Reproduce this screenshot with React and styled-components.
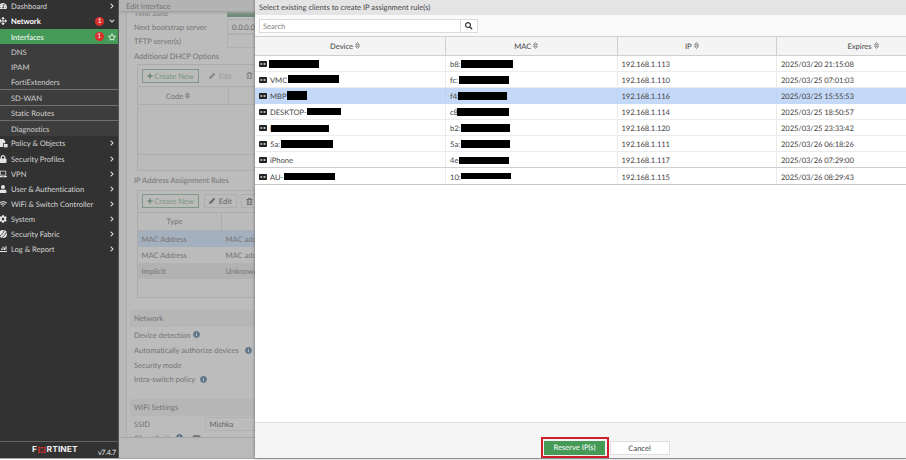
import styled, { createGlobalStyle, css } from 'styled-components';
import {
  FaTachometerAlt, FaArrowsAlt, FaLock, FaLaptop, FaUser, FaWifi, FaCog,
  FaChartBar, FaChevronRight, FaChevronDown, FaRegStar, FaSearch, FaPlus,
  FaPencilAlt, FaRegTrashAlt, FaInfoCircle,
} from 'react-icons/fa';

const GlobalStyle = createGlobalStyle`
  * {
    box-sizing: border-box;
  }
  body {
    margin: 0;
    overflow: hidden;
    font-family: Lato, 'Open Sans', sans-serif;
    font-size: 7.6px;
    letter-spacing: -0.02px;
    color: #444;
    background: #fff;
    text-rendering: geometricPrecision;
  }
  svg {
    display: block;
    flex: none;
  }
`;
const Screen = styled.div`
  width: 906px;
  height: 460px;
  display: flex;
  flex-direction: column;
  overflow: hidden;
`;
const Main = styled.div`
  height: 459px;
  display: flex;
  border-bottom: 1px solid #a6a6a6;
`;

/* sidebar */
const Sidebar = styled.nav`
  width: 119px;
  height: 458px;
  display: flex;
  flex: none;
  flex-direction: column;
  overflow: hidden;
  color: #d6d6d6;
  background-color: #323232;
  border-right: 1px solid #555;
`;
const Menu = styled.div`
  flex: 1;
  margin-top: -1.2px;
`;
const MenuRow = styled.div`
  height: 15.1px;
  display: flex;
  align-items: center;
  padding-right: 3px;
  color: ${(p) => (p.$open ? '#fff' : '#d6d6d6')};
  font-weight: ${(p) => (p.$open ? 700 : 400)};
`;
const MenuIcon = styled.span`
  width: 11px;
  display: flex;
  margin-left: -1px;
  margin-right: 1px;
  color: #e4e4e4;
`;
const MenuLabel = styled.span`
  flex: 1;
  white-space: nowrap;
`;
const Caret = styled.span`
  width: 7px;
  display: flex;
  justify-content: center;
  color: #e4e4e4;
`;
const SubMenu = styled.div`
  background-color: #3d3d3d;
`;
const SubRow = styled.div`
  height: ${(p) => (p.$line ? '15.5px' : '15.1px')};
  display: flex;
  align-items: center;
  padding: 0 2.5px 0 11px;
  color: ${(p) => (p.$active ? '#fff' : '#cfcfcf')};
  background-color: ${(p) => (p.$active ? '#459a58' : 'transparent')};
  ${(p) => p.$line && css`
    border-top: 1px solid #707070;
  `}
`;
const Badge = styled.span`
  width: 9px;
  height: 9px;
  display: flex;
  align-items: center;
  justify-content: center;
  margin-right: 4px;
  border-radius: 50%;
  color: #fff;
  font-size: 6.5px;
  font-weight: 400;
  background-color: #d9302c;
`;
const Brand = styled.div`
  height: 17.5px;
  display: flex;
  align-items: center;
  padding: 0 2px 0 32px;
  border-top: 1px solid #626262;
`;
const Wordmark = styled.div`
  width: 66.5px;
  display: flex;
  align-items: center;
  gap: 0.8px;
  color: #eee;
  font-family: Inter, sans-serif;
  font-size: 8.4px;
  font-weight: 700;
  letter-spacing: 0.1px;
  line-height: 8px;
`;
const Version = styled.span`
  padding-top: 6px;
  color: #e6e6e6;
  font-size: 7.2px;
  letter-spacing: -0.25px;
  line-height: 9px;
`;

/* page behind the slide-out */
const Page = styled.section`
  width: 136px;
  height: 458px;
  display: flex;
  flex: none;
  flex-direction: column;
  overflow: hidden;
  color: #747474;
  background-color: #b9b9b9;
`;
const PageTitle = styled.div`
  height: 12px;
  padding: 0 0 0 7px;
  line-height: 12px;
  background-color: #b3b3b3;
  border-bottom: 1px solid #a2a2a2;
  box-shadow: 0 1px 2px #a6a6a6;
  z-index: 1;
`;
const PageBody = styled.div`
  height: 425px;
  margin-left: 7px;
  padding-left: 7px;
  overflow: hidden;
  border-left: 1px solid #adadad;
  background-color: #bcbcbc;
  white-space: nowrap;
`;
const PageFooter = styled.div`
  flex: 1;
  border-top: 1px solid #a7a7a7;
  background-color: #bababa;
`;
const Field = styled.div`
  height: ${(p) => p.$h || 14.5}px;
  display: flex;
  align-items: center;
`;
const FieldLabel = styled.span`
  width: ${(p) => (p.$w ? `${p.$w}px` : 'auto')};
  flex: none;
`;
// label scrolled halfway under the page title
const ScrolledLabel = styled(FieldLabel)`
  align-self: flex-start;
  line-height: 2px;
`;
const FieldValue = styled.span`
  height: ${(p) => p.$h || 14}px;
  flex: 1;
  display: flex;
  align-items: center;
  padding-left: 4px;
  color: #666;
  border: 1px solid #b1b1b1;
  border-right: 0;
`;
const ZoneToggle = styled.span`
  flex: 1;
  height: 5px;
  align-self: flex-start;
  background-color: #708b79;
`;
const InfoIcon = styled(FaInfoCircle)`
  margin-left: ${(p) => p.$gap || 3}px;
  color: #5d7387;
`;
const Pill = styled.span`
  width: 9px;
  height: 6px;
  margin-left: 9px;
  border-radius: 3px;
  background-color: #777;
`;
const SectionBar = styled.div`
  height: 17px;
  margin: 0 0 0 -4px;
  padding-left: 4px;
  display: flex;
  align-items: center;
  background-color: #b6b6b6;
`;
const Box = styled.div`
  height: ${(p) => p.$h}px;
  margin-left: 3px;
  border: 1px solid #acacac;
  border-right: 0;
  background-color: #bbb;
`;
const BoxTools = styled.div`
  height: 22px;
  display: flex;
  align-items: center;
  padding-left: 4px;
  border-bottom: 1px solid #adadad;
`;
const ToolButton = styled.span`
  width: ${(p) => p.$w}px;
  height: 14px;
  display: flex;
  align-items: center;
  justify-content: center;
  flex: none;
  gap: ${(p) => (p.$create ? 1 : 3.5)}px;
  margin-right: ${(p) => (p.$create ? 5 : 4)}px;
  color: ${(p) => (p.$create ? '#7a9782' : p.$off ? '#9a9a9a' : '#646464')};
  border: 1px solid ${(p) => (p.$create ? '#7e9a86' : p.$off ? 'transparent' : '#afafaf')};
  svg {
    color: ${(p) => (p.$create ? '#557a60' : p.$off ? '#7c7c7c' : '#5c5c5c')};
  }
`;
const BoxHead = styled.div`
  height: 18px;
  display: flex;
  border-bottom: 1px solid #adadad;
`;
const BoxHeadCell = styled.span`
  width: ${(p) => p.$w}px;
  display: flex;
  align-items: center;
  justify-content: center;
  gap: 2px;
  flex: none;
  padding-right: ${(p) => p.$pad || 10}px;
  border-right: 1px solid #adadad;
`;
const BoxBlank = styled.div`
  height: 50px;
  border-bottom: 1px solid #adadad;
`;
const BoxRow = styled.div`
  height: 16.1px;
  display: flex;
  align-items: center;
  padding-left: 3.5px;
  background-color: ${(p) => p.$bg || 'transparent'};
  span {
    width: 84px;
    flex: none;
  }
`;

/* slide-out */
const Drawer = styled.section`
  flex: 1;
  height: 458px;
  display: flex;
  flex-direction: column;
  background-color: #fff;
  box-shadow: 0 0 3px #666;
  z-index: 1;
`;
const DrawerTitle = styled.h1`
  height: 15px;
  margin: 0;
  padding-left: 4px;
  color: #444;
  font-size: 7.6px;
  font-weight: 400;
  line-height: 14px;
  background-color: #e4e4e4;
`;
const SearchBar = styled.div`
  height: 21px;
  display: flex;
  padding: 4px;
  background-color: #fafafa;
`;
const SearchInput = styled.div`
  width: 202px;
  height: 14px;
  padding-left: 3px;
  color: #808080;
  line-height: 12px;
  background-color: #fff;
  border: 1px solid #dadada;
`;
const SearchButton = styled.div`
  width: 18px;
  height: 14px;
  display: flex;
  align-items: center;
  justify-content: center;
  margin-left: -1px;
  color: #333;
  background-color: #fff;
  border: 1px solid #dadada;
`;
const columns = css`
  display: grid;
  grid-template-columns: 191px 171.5px 159.5px 1fr;
`;
const TableHead = styled.div`
  ${columns}
  height: 19.5px;
  background-color: #f4f4f4;
  border-top: 1px solid #cfcfcf;
  border-bottom: 1px solid #cfcfcf;
`;
const HeadCell = styled.div`
  display: flex;
  align-items: center;
  justify-content: center;
  gap: 2px;
  padding: 0 10px 0 ${(p) => p.$shift || 0}px;
  border-right: 1px solid #cfcfcf;
  &:last-child {
    border-right: 0;
  }
`;
const TableBody = styled.div`
  border-bottom: 1.5px solid #c4c4c4;
`;
const Row = styled.div`
  ${columns}
  height: 16.1px;
  background-color: ${(p) => (p.$selected ? '#c4d9f8' : '#fff')};
  border-bottom: 1px solid ${(p) => (p.$selected ? '#c4d9f8' : p.$heavy ? '#cfcfcf' : '#ececec')};
  &:last-child {
    border-bottom: 0;
  }
`;
const Cell = styled.div`
  position: relative;
  display: flex;
  align-items: center;
  padding-left: 4px;
  padding-top: 1px;
  white-space: nowrap;
  letter-spacing: ${(p) => (p.$tight ? '-0.08px' : 'inherit')};
  border-right: 1px solid ${(p) => (p.$selected ? '#bfd2ef' : '#ebebeb')};
  &:last-child {
    border-right: 0;
  }
`;
const Mask = styled.span`
  position: absolute;
  left: ${(p) => p.$box[0]}px;
  top: ${(p) => p.$box[1]}px;
  width: ${(p) => p.$box[2]}px;
  height: ${(p) => p.$box[3]}px;
  background-color: #000;
`;
const DrawerFooter = styled.div`
  height: 36px;
  display: flex;
  justify-content: center;
  align-items: flex-end;
  gap: 1px;
  margin-top: auto;
  padding-left: 49px;
  background-color: #f5f5f5;
  border-top: 1px solid #ddd;
`;
const Highlight = styled.div`
  width: 68px;
  height: 21px;
  display: flex;
  align-items: center;
  justify-content: center;
  border: 2px solid #c9202b;
`;
const Button = styled.div`
  width: ${(p) => (p.$primary ? 61 : 60)}px;
  height: 14px;
  line-height: ${(p) => (p.$primary ? 13 : 12)}px;
  text-align: center;
  color: ${(p) => (p.$primary ? '#fff' : '#444')};
  background-color: ${(p) => (p.$primary ? '#459a58' : '#fff')};
  border: ${(p) => (p.$primary ? '0' : '1px solid #dedede')};
  margin-bottom: ${(p) => (p.$primary ? 0 : 3)}px;
`;

const SortIcon = () => (
  <svg width="5" height="7" viewBox="0 0 5 7">
    <path d="M0.5 2.8L2.5 0.5l2 2.3zM0.5 4.2l2 2.3 2-2.3z" fill="none" stroke="#777" strokeWidth="0.8" />
  </svg>
);
const PolicyIcon = () => (
  <svg width="9" height="9" viewBox="0 0 9 9">
    <path d="M0 0h4.2L6.2 2v2.2H4V8H0z" fill="currentColor" />
    <path d="M4.8 5h3.8v3.4H4.8z" fill="currentColor" />
  </svg>
);
const FabricIcon = () => (
  <svg width="8" height="8" viewBox="0 0 8 8">
    <circle cx="4" cy="4" r="4" fill="currentColor" />
    <path d="M0.8 6.2C2.4 5.4 4.4 3.2 5.2 0.4M2.6 7.6C4.8 6.6 6.8 4.4 7.3 2" stroke="#323232" strokeWidth="0.8" fill="none" />
  </svg>
);
const DeviceIcon = styled(({ className }) => (
  <svg className={className} width="8" height="6" viewBox="0 0 8 6">
    <rect width="8" height="6" rx="0.8" fill="#222" />
    <path d="M1.2 3h2.2M4.2 3h2.6M2.3 2.2v1.6M5.5 2.2v1.6" stroke="#fff" strokeWidth="0.7" />
  </svg>
))`
  margin-right: 3px;
`;

const MENU = [
  ['Policy & Objects', PolicyIcon],
  ['Security Profiles', FaLock],
  ['VPN', FaLaptop],
  ['User & Authentication', FaUser],
  ['WiFi & Switch Controller', FaWifi],
  ['System', FaCog],
  ['Security Fabric', FabricIcon],
  ['Log & Report', FaChartBar],
];

// masks are [left, top, width, height] inside the cell
const CLIENTS = [
  { name: '', nameMask: [14, 4.5, 50, 7.5], mac: 'b8:', macMask: [15, 4.5, 52, 7.5], ip: '192.168.1.113', expires: '2025/03/20 21:15:08' },
  { name: 'VMC', nameMask: [33, 3.5, 51, 8], mac: 'fc:', macMask: [13, 4.5, 50, 7.5], ip: '192.168.1.110', expires: '2025/03/25 07:01:03' },
  { name: 'MBP', nameMask: [32, 3.5, 20, 8.5], mac: 'f4:', macMask: [12, 4, 49, 8.5], ip: '192.168.1.116', expires: '2025/03/25 15:55:53', selected: true },
  { name: 'DESKTOP-', nameMask: [52, 4.5, 33.5, 7], mac: 'c8', macMask: [11, 4, 52, 8], ip: '192.168.1.114', expires: '2025/03/25 18:50:57' },
  { name: '(', nameMask: [16, 5.5, 58, 6.5], mac: 'b2:', macMask: [15, 4, 49, 8.5], ip: '192.168.1.120', expires: '2025/03/25 23:33:42' },
  { name: '5a:', nameMask: [26, 4.5, 52, 7.5], mac: '5a:', macMask: [14.5, 4.5, 49, 7.5], ip: '192.168.1.111', expires: '2025/03/26 06:18:26' },
  { name: 'iPhone', mac: '4e', macMask: [12.5, 5, 50.5, 6.5], ip: '192.168.1.117', expires: '2025/03/26 07:29:00', heavy: true },
  { name: 'AU-', nameMask: [29, 5, 51, 6.5], mac: '10:', macMask: [15, 4.5, 50, 6.5], ip: '192.168.1.115', expires: '2025/03/26 08:29:43' },
];

function NavMenu() {
  return (
    <Sidebar>
      <Menu>
        <MenuRow>
          <MenuIcon><FaTachometerAlt size={8} /></MenuIcon>
          <MenuLabel>Dashboard</MenuLabel>
          <Caret><FaChevronRight size={6} /></Caret>
        </MenuRow>
        <MenuRow $open>
          <MenuIcon><FaArrowsAlt size={8} /></MenuIcon>
          <MenuLabel>Network</MenuLabel>
          <Badge>1</Badge>
          <Caret><FaChevronDown size={6} /></Caret>
        </MenuRow>
        <SubMenu>
          <SubRow $active>
            <MenuLabel>Interfaces</MenuLabel>
            <Badge>1</Badge>
            <FaRegStar size={8} />
          </SubRow>
          <SubRow>DNS</SubRow>
          <SubRow>IPAM</SubRow>
          <SubRow>FortiExtenders</SubRow>
          <SubRow $line>SD-WAN</SubRow>
          <SubRow $line>Static Routes</SubRow>
          <SubRow $line>Diagnostics</SubRow>
        </SubMenu>
        {MENU.map(([label, Icon]) => (
          <MenuRow key={label}>
            <MenuIcon><Icon size={8} /></MenuIcon>
            <MenuLabel>{label}</MenuLabel>
            <Caret><FaChevronRight size={6} /></Caret>
          </MenuRow>
        ))}
      </Menu>
      <Brand>
        <Wordmark>
          F
          <svg width="8" height="6" viewBox="0 0 7 6" preserveAspectRatio="none">
            <path d="M0 0h2v1.6H0zM2.6 0h1.8v1.6H2.6zM5 0h2v1.6H5zM0 2.2h2v1.6H0zM5 2.2h2v1.6H5zM0 4.4h2V6H0zM2.6 4.4h1.8V6H2.6zM5 4.4h2V6H5z" fill="#d8322c" />
          </svg>
          RTINET
        </Wordmark>
        <Version>v7.4.7</Version>
      </Brand>
    </Sidebar>
  );
}

function EditInterface() {
  return (
    <Page>
      <PageTitle>Edit Interface</PageTitle>
      <PageBody>
        <Field $h={7}>
          <ScrolledLabel $w={93}>Time zone</ScrolledLabel>
          <ZoneToggle />
        </Field>
        <Field $h={15}>
          <FieldLabel $w={93}>Next bootstrap server</FieldLabel>
          <FieldValue $h={15}>0.0.0.0</FieldValue>
        </Field>
        <Field>
          <FieldLabel $w={93}>TFTP server(s)</FieldLabel>
          <FieldValue />
        </Field>
        <Field $h={15.5}>Additional DHCP Options</Field>
        <Box $h={107}>
          <BoxTools>
            <ToolButton $create $w={57}><FaPlus size={6} />Create New</ToolButton>
            <ToolButton $off $w={33}><FaPencilAlt size={6} />Edit</ToolButton>
            <ToolButton $off $w={17}><FaRegTrashAlt size={7} /></ToolButton>
          </BoxTools>
          <BoxHead>
            <BoxHeadCell $w={91}>Code <SortIcon /></BoxHeadCell>
          </BoxHead>
          <BoxBlank />
        </Box>
        <Field $h={18.5}>IP Address Assignment Rules</Field>
        <Box $h={108}>
          <BoxTools>
            <ToolButton $create $w={57}><FaPlus size={6} />Create New</ToolButton>
            <ToolButton $w={33}><FaPencilAlt size={6} />Edit</ToolButton>
            <ToolButton $w={17}><FaRegTrashAlt size={7} /></ToolButton>
          </BoxTools>
          <BoxHead>
            <BoxHeadCell $w={84}>Type</BoxHeadCell>
          </BoxHead>
          <BoxRow $bg="#a5b0bf"><span>MAC Address</span>MAC address</BoxRow>
          <BoxRow><span>MAC Address</span>MAC address</BoxRow>
          <BoxRow $bg="#b2b2b2"><span>Implicit</span>Unknown</BoxRow>
        </Box>
        <Field $h={12} />
        <SectionBar>Network</SectionBar>
        <Field $h={16.5}>Device detection<InfoIcon size={7} /></Field>
        <Field>Automatically authorize devices<InfoIcon size={7} $gap={6} /></Field>
        <Field>Security mode</Field>
        <Field>Intra-switch policy<InfoIcon size={7} $gap={5} /></Field>
        <Field $h={12} />
        <SectionBar>WiFi Settings</SectionBar>
        <Field $h={17}>
          <FieldLabel $w={70.5}>SSID</FieldLabel>
          <FieldValue>Mishka</FieldValue>
        </Field>
        <Field $h={10}>
          Client limit<InfoIcon size={7} $gap={6} />
          <Pill />
        </Field>
      </PageBody>
      <PageFooter />
    </Page>
  );
}

function ClientDrawer() {
  return (
    <Drawer>
      <DrawerTitle>Select existing clients to create IP assignment rule(s)</DrawerTitle>
      <SearchBar>
        <SearchInput>Search</SearchInput>
        <SearchButton><FaSearch size={7.5} /></SearchButton>
      </SearchBar>
      <TableHead>
        <HeadCell>Device <SortIcon /></HeadCell>
        <HeadCell>MAC <SortIcon /></HeadCell>
        <HeadCell>IP <SortIcon /></HeadCell>
        <HeadCell $shift={53}>Expires <SortIcon /></HeadCell>
      </TableHead>
      <TableBody>
        {CLIENTS.map((c) => (
          <Row key={c.ip} $selected={c.selected} $heavy={c.heavy}>
            <Cell $selected={c.selected}>
              <DeviceIcon />
              {c.name}
              {c.nameMask && <Mask $box={c.nameMask} />}
            </Cell>
            <Cell $selected={c.selected}>
              {c.mac}
              <Mask $box={c.macMask} />
            </Cell>
            <Cell $tight $selected={c.selected}>{c.ip}</Cell>
            <Cell $tight>{c.expires}</Cell>
          </Row>
        ))}
      </TableBody>
      <DrawerFooter>
        <Highlight><Button $primary>Reserve IP(s)</Button></Highlight>
        <Button>Cancel</Button>
      </DrawerFooter>
    </Drawer>
  );
}

export default function App() {
  return (
    <Screen>
      <GlobalStyle />
      <Main>
        <NavMenu />
        <EditInterface />
        <ClientDrawer />
      </Main>
    </Screen>
  );
}
